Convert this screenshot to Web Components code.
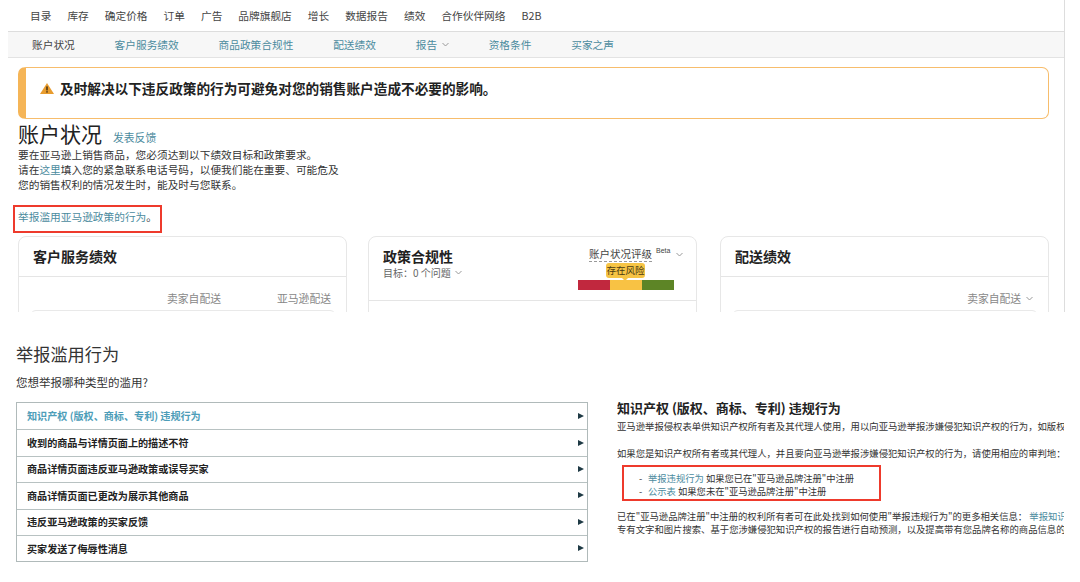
<!DOCTYPE html>
<html lang="zh">
<head>
<meta charset="utf-8">
<title>账户状况</title>
<style>
  html, body { margin: 0; background: #fff; }
  body {
    width: 1080px; height: 582px; overflow: hidden;
    font-family: "Noto Sans CJK SC", "Liberation Sans", sans-serif;
    color: #333;
  }
</style>
</head>
<body>

<template id="tpl-top-nav">
  <style>
    :host { display: flex; gap: 16px; height: 30px; padding: 0 0 1px 22px; align-items: center;
            border-bottom: 1px solid #ddd; font-size: 10.7px; color: #444; }
    ::slotted(span) { white-space: nowrap; }
  </style>
  <slot></slot>
</template>

<template id="tpl-sub-nav">
  <style>
    :host { display: flex; gap: 39.8px; height: 24px; padding: 0 0 1px 24px; align-items: center;
            background: #f7f7f7; border-bottom: 1px solid #e3e3e3;
            font-size: 10.7px; color: #4b8b9e; }
    ::slotted(.on) { color: #444; }
    ::slotted(span) { white-space: nowrap; }
  </style>
  <slot></slot>
</template>

<template id="tpl-notice-alert">
  <style>
    :host { display: flex; align-items: flex-start; gap: 6px; box-sizing: border-box; height: 52px;
            margin: 9px 0 0 10px; width: 1031px; padding: 10px 0 0 14px;
            border: 1px solid #f7bd6c; border-left: 8px solid #f5b557; border-radius: 7px;
            font-size: 13.65px; line-height: 20px; font-weight: 700; color: #222; }
    svg { flex: none; margin-top: 5px; }
  </style>
  <svg width="14" height="11" viewBox="0 0 14 11">
    <path d="M7 0 L14 11 L0 11 Z" fill="#e89c2e"/>
    <rect x="6.3" y="3.4" width="1.4" height="4" fill="#3b2a10"/>
    <rect x="6.3" y="8.2" width="1.4" height="1.4" fill="#3b2a10"/>
  </svg>
  <span><slot></slot></span>
</template>

<template id="tpl-health-head">
  <style>
    :host { display: block; margin: 0 0 0 10px; font-size: 10.7px; line-height: 15px; color: #333; }
    .title { display: flex; align-items: baseline; gap: 11px; height: 28px; }
    h1 { margin: 0; font-size: 21px; font-weight: 400; line-height: 28px; color: #222; }
    .fb { font-size: 10.8px; color: #4b8b9e; }
    .copy { width: 325px; }
    .flag { box-sizing: border-box; width: 149px; height: 28px;
            margin: 13px 0 0 -5px; padding: 1px 0 0 3px;
            border: 2px solid #ee3a2c; font-size: 10.7px; line-height: 18px; white-space: nowrap; }
    ::slotted(a) { color: #4b8b9e; }
  </style>
  <div class="title"><h1>账户状况</h1><span class="fb">发表反馈</span></div>
  <div class="copy"><slot></slot></div>
  <div class="flag"><slot name="flag"></slot></div>
</template>

<template id="tpl-status-card">
  <style>
    :host { display: block; box-sizing: border-box; width: 329px; height: 120px; flex: none;
            border: 1px solid #e7e7e7; border-radius: 8px; background: #fff; }
    header { display: flex; justify-content: space-between; box-sizing: border-box;
             padding: 8px 14px 0 14px; min-height: 40px; border-bottom: 1px solid #e5e5e5; }
    h2 { margin: 0; font-size: 14px; line-height: 22px; font-weight: 700; color: #222; }
    .body { padding: 13px 10px 0 11px; font-size: 10.8px; line-height: 16px; color: #888; }
    .inner { height: 40px; margin-top: 4px; border: 1px solid #e9e9e9; border-radius: 6px; }
  </style>
  <header>
    <div><h2></h2><slot name="sub"></slot></div>
    <slot name="aside"></slot>
  </header>
  <div class="body"><slot></slot><div class="inner"></div></div>
</template>

<template id="tpl-health-rating">
  <style>
    :host { display: block; width: 96px; margin: 2px 8px 10px 0; font-size: 10.5px; color: #444; }
    .row { display: flex; align-items: flex-start; height: 16px; white-space: nowrap; }
    .lbl { line-height: 14px; border-bottom: 1px dashed #999; height: 14px; margin-left: 11px; }
    sup { font-size: 7px; line-height: 8px; margin: 0 0 0 4px; font-family: "Liberation Sans", sans-serif; }
    svg { flex: none; margin: 5px 0 0 6px; }
    .tip { position: relative; width: 39px; height: 15px; margin-left: 28px; background: #f6c445;
           border-radius: 3px; font-size: 9.5px; line-height: 15px; text-align: center; color: #4a3a10; }
    .tip::after { content: ""; position: absolute; left: 16px; top: 15px; border: 3px solid transparent;
                  border-top-color: #f6c445; }
    .bar { display: flex; width: 96px; height: 10px; margin-top: 2px; }
    .bar i { flex: 1; }
  </style>
  <div class="row"><span class="lbl">账户状况评级</span><sup>Beta</sup>
    <svg width="7" height="5" viewBox="0 0 7 5"><path d="M.5 1 L3.5 4 L6.5 1" fill="none" stroke="#999"/></svg></div>
  <div class="tip">存在风险</div>
  <div class="bar"><i style="background:#c1283e"></i><i style="background:#f8c244"></i><i style="background:#5d8526"></i></div>
</template>

<template id="tpl-abuse-row">
  <style>
    :host { display: flex; align-items: center; justify-content: space-between; box-sizing: border-box;
            height: 26.4px; padding: 0 3px 1px 10px; border-top: 1px solid #b8c2c2;
            font-size: 10.1px; font-weight: 700; color: #222; }
    :host(:first-child) { border-top: 0; }
    :host([active]) { color: #4d9db8; }
    i { width: 0; height: 0; border-left: 6px solid #1f3a45; border-top: 3.5px solid transparent;
        border-bottom: 3.5px solid transparent; }
  </style>
  <span><slot></slot></span><i></i>
</template>

<template id="tpl-abuse-list">
  <style>
    :host { display: block; box-sizing: border-box; width: 572px; margin-top: 12px;
            border: 1px solid #b0baba; }
  </style>
  <slot></slot>
</template>

<template id="tpl-ip-help">
  <style>
    :host { display: block; width: 447px; overflow: hidden; font-size: 9.35px; line-height: 13px; color: #333; }
    h3 { margin: 0 0 3px; font-size: 13px; line-height: 18px; font-weight: 700; color: #222; white-space: nowrap; }
    ::slotted(p) { margin: 0; white-space: nowrap; }
    ::slotted(.second) { margin-top: 14px; }
    .box { box-sizing: border-box; width: 259px; height: 36px; margin: 5px 0 8.5px 5px; padding: 4.5px 0 0 15px;
           border: 2px solid #ee3a2c; font-size: 9.3px; white-space: nowrap; }
  </style>
  <h3></h3>
  <slot></slot>
  <div class="box"><slot name="links"></slot></div>
  <slot name="tail"></slot>
</template>

<top-panel>
  <top-nav>
    <span>目录</span><span>库存</span><span>确定价格</span><span>订单</span><span>广告</span><span>品牌旗舰店</span><span>增长</span><span>数据报告</span><span>绩效</span><span>合作伙伴网络</span><span>B2B</span>
  </top-nav>
  <sub-nav>
    <span class="on">账户状况</span><span>客户服务绩效</span><span>商品政策合规性</span><span>配送绩效</span><span>报告 &nbsp;<svg width="7" height="5" viewBox="0 0 7 5" style="vertical-align:2px"><path d="M.5 1 L3.5 4 L6.5 1" fill="none" stroke="#999"/></svg></span><span>资格条件</span><span>买家之声</span>
  </sub-nav>
  <notice-alert>及时解决以下违反政策的行为可避免对您的销售账户造成不必要的影响。</notice-alert>
  <health-head>
    要在亚马逊上销售商品&#xFF0C;您必须达到以下绩效目标和政策要求。<br>
    请在<a>这里</a>填入您的紧急联系电话号码&#xFF0C;以便我们能在重要、可能危及您的销售权利的情况发生时&#xFF0C;能及时与您联系。
    <span slot="flag"><a style="color:#4b8b9e">举报滥用亚马逊政策的行为</a>。</span>
  </health-head>
  <card-row>
    <status-card heading="客户服务绩效">
      <div style="display:flex;justify-content:flex-end;gap:56px;padding-right:5px"><span>卖家自配送</span><span>亚马逊配送</span></div>
    </status-card>
    <status-card heading="政策合规性">
      <div slot="sub" style="font-size:10px;line-height:14px;color:#666;margin-top:-1px">目标&#xFF1A;0 个问题 &nbsp;<svg width="7" height="5" viewBox="0 0 7 5" style="vertical-align:2px"><path d="M.5 1 L3.5 4 L6.5 1" fill="none" stroke="#999"/></svg></div>
      <health-rating slot="aside"></health-rating>
    </status-card>
    <status-card heading="配送绩效" style="margin-left:2px">
      <div style="text-align:right;padding-right:5px">卖家自配送 &nbsp;<svg width="7" height="5" viewBox="0 0 7 5" style="vertical-align:2px"><path d="M.5 1 L3.5 4 L6.5 1" fill="none" stroke="#999"/></svg></div>
    </status-card>
  </card-row>
</top-panel>

<report-panel>
  <div slot="left">
    <abuse-list>
      <abuse-row active>知识产权 (版权、商标、专利) 违规行为</abuse-row>
      <abuse-row>收到的商品与详情页面上的描述不符</abuse-row>
      <abuse-row>商品详情页面违反亚马逊政策或误导买家</abuse-row>
      <abuse-row>商品详情页面已更改为展示其他商品</abuse-row>
      <abuse-row>违反亚马逊政策的买家反馈</abuse-row>
      <abuse-row>买家发送了侮辱性消息</abuse-row>
    </abuse-list>
  </div>
  <ip-help slot="right" heading="知识产权 (版权、商标、专利) 违规行为">
    <p>亚马逊举报侵权表单供知识产权所有者及其代理人使用&#xFF0C;用以向亚马逊举报涉嫌侵犯知识产权的行为&#xFF0C;如版权</p>
    <p class="second">如果您是知识产权所有者或其代理人&#xFF0C;并且要向亚马逊举报涉嫌侵犯知识产权的行为&#xFF0C;请使用相应的审判地&#xFF1A;</p>
    <div slot="links"><span style="display:inline-block;width:9px">-</span><a style="color:#4b8b9e">举报违规行为</a> 如果您已在"亚马逊品牌注册"中注册</div>
    <div slot="links"><span style="display:inline-block;width:9px">-</span><a style="color:#4b8b9e">公示表</a> 如果您未在"亚马逊品牌注册"中注册</div>
    <p slot="tail">已在"亚马逊品牌注册"中注册的权利所有者可在此处找到如何使用"举报违规行为"的更多相关信息&#xFF1A; <a style="color:#4b8b9e">举报知识产权</a></p>
    <p slot="tail">专有文字和图片搜索、基于您涉嫌侵犯知识产权的报告进行自动预测&#xFF0C;以及提高带有您品牌名称的商品信息的</p>
  </ip-help>
</report-panel>

<script>
  // plain elements: clone the template into an open shadow root
  function fromTemplate(tag) {
    customElements.define(tag, class extends HTMLElement {
      constructor() {
        super();
        this.attachShadow({ mode: 'open' })
            .appendChild(document.getElementById('tpl-' + tag).content.cloneNode(true));
      }
      connectedCallback() {
        const h = this.shadowRoot.querySelector('h2, h3');
        if (h) h.textContent = this.getAttribute('heading') || '';
      }
    });
  }
  ['top-nav', 'sub-nav', 'notice-alert', 'health-head', 'status-card', 'health-rating',
   'abuse-row', 'abuse-list', 'ip-help'].forEach(fromTemplate);

  class TopPanel extends HTMLElement {
    constructor() {
      super();
      this.attachShadow({ mode: 'open' }).innerHTML = `
        <style>
          :host { display: block; box-sizing: border-box; width: 1057px; height: 312px; margin-left: 8px;
                  overflow: hidden; border-right: 1px solid #ddd; }
        </style>
        <slot></slot>`;
    }
  }
  customElements.define('top-panel', TopPanel);

  class CardRow extends HTMLElement {
    constructor() {
      super();
      this.attachShadow({ mode: 'open' }).innerHTML = `
        <style>
          :host { display: flex; gap: 21px; margin: 3px 0 0 10px; }
        </style>
        <slot></slot>`;
    }
  }
  customElements.define('card-row', CardRow);

  class ReportPanel extends HTMLElement {
    constructor() {
      super();
      this.attachShadow({ mode: 'open' }).innerHTML = `
        <style>
          :host { display: block; padding: 29px 0 0 16px; color: #333; }
          h2 { margin: 0; font-size: 17.2px; line-height: 26px; font-weight: 400; color: #333; }
          .ask { margin-top: 7px; font-size: 11.5px; line-height: 16px; }
          .cols { display: flex; }
          .right { margin-left: 29px; padding-top: 9px; }
        </style>
        <h2>举报滥用行为</h2>
        <div class="ask">您想举报哪种类型的滥用?</div>
        <div class="cols">
          <div><slot name="left"></slot></div>
          <div class="right"><slot name="right"></slot></div>
        </div>`;
    }
  }
  customElements.define('report-panel', ReportPanel);
</script>
</body>
</html>
